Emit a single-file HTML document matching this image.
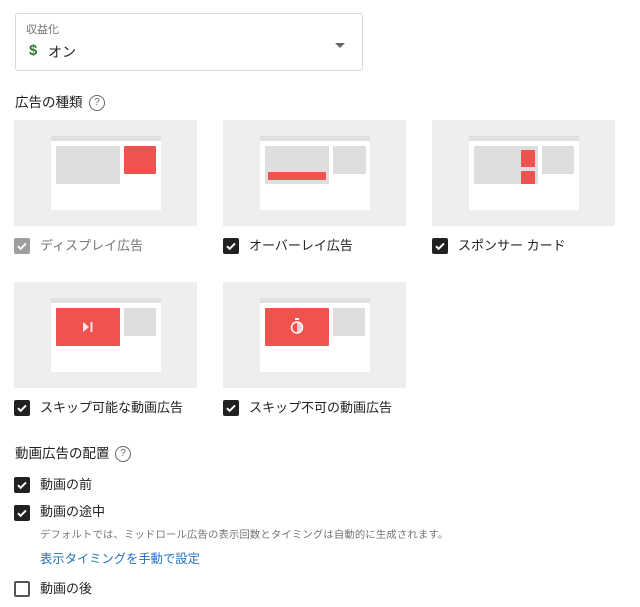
<!DOCTYPE html>
<html><head><meta charset="utf-8"><style>
*{margin:0;padding:0;box-sizing:border-box}
body{width:640px;height:607px;background:#fff;font-family:"Liberation Sans","Noto Sans CJK JP",sans-serif;color:#222;position:relative;overflow:hidden}
.a{position:absolute}
.sel{left:15px;top:13px;width:348px;height:58px;border:1px solid #dadada;border-radius:3px}
.card{background:#eeeeee;width:183px;height:106px}
.bar{background:#e0e0e0}
.white{background:#fff}
.g{background:#dedede}
.r{background:#ef5350;border-radius:1px}
.cb{width:16px;height:16px;border-radius:2px;background:#212121}
.cb svg{position:absolute;left:2px;top:2px}
.lbl{font-size:13px;line-height:16px}
.h{font-size:13.5px;line-height:16px}
.q{width:16px;height:16px;border:1.3px solid #666;border-radius:50%;font-size:10px;text-align:center;line-height:13px;color:#666}
</style></head><body>
<div class="a sel"></div>
<div class="a" style="left:26px;top:21px;font-size:11px;color:#757575">収益化</div>
<div class="a" style="left:29px;top:42px;font-size:15px;color:#2e7d32;font-weight:bold">$</div>
<div class="a" style="left:48px;top:42px;font-size:14px">オン</div>
<div class="a" style="left:335px;top:43px;width:0;height:0;border-left:5px solid transparent;border-right:5px solid transparent;border-top:5px solid #666"></div>

<div class="a h" style="left:15px;top:95px">広告の種類</div>
<div class="a q" style="left:89px;top:95px">?</div>

<div class="a card" style="left:14px;top:120px"></div>
<div class="a bar" style="left:51px;top:136px;width:110px;height:5px"></div>
<div class="a white" style="left:51px;top:141px;width:110px;height:69px"></div>
<div class="a g" style="left:56px;top:146px;width:64px;height:38px"></div>
<div class="a r" style="left:124px;top:146px;width:32px;height:28px"></div>

<div class="a card" style="left:223px;top:120px"></div>
<div class="a bar" style="left:260px;top:136px;width:110px;height:5px"></div>
<div class="a white" style="left:260px;top:141px;width:110px;height:69px"></div>
<div class="a g" style="left:265px;top:146px;width:64px;height:38px"></div>
<div class="a g" style="left:333px;top:146px;width:33px;height:28px"></div>
<div class="a r" style="left:268px;top:172px;width:58px;height:8px"></div>

<div class="a card" style="left:432px;top:120px"></div>
<div class="a bar" style="left:469px;top:136px;width:110px;height:5px"></div>
<div class="a white" style="left:469px;top:141px;width:110px;height:69px"></div>
<div class="a g" style="left:474px;top:146px;width:64px;height:38px"></div>
<div class="a g" style="left:542px;top:146px;width:32px;height:28px"></div>
<div class="a r" style="left:521px;top:150px;width:14px;height:17px"></div>
<div class="a r" style="left:521px;top:171px;width:14px;height:13px"></div>

<div class="a cb" style="left:14px;top:238px;background:#9e9e9e"><svg width="12" height="12" viewBox="0 0 12 12"><path d="M2 6.2l2.6 2.6L10 3.4" stroke="#fff" stroke-width="2" fill="none"/></svg></div>
<div class="a lbl" style="left:40px;top:238px;color:#757575">ディスプレイ広告</div>
<div class="a cb" style="left:223px;top:238px"><svg width="12" height="12" viewBox="0 0 12 12"><path d="M2 6.2l2.6 2.6L10 3.4" stroke="#fff" stroke-width="2" fill="none"/></svg></div>
<div class="a lbl" style="left:249px;top:238px">オーバーレイ広告</div>
<div class="a cb" style="left:432px;top:238px"><svg width="12" height="12" viewBox="0 0 12 12"><path d="M2 6.2l2.6 2.6L10 3.4" stroke="#fff" stroke-width="2" fill="none"/></svg></div>
<div class="a lbl" style="left:458px;top:238px">スポンサー カード</div>

<div class="a card" style="left:14px;top:282px"></div>
<div class="a bar" style="left:51px;top:298px;width:110px;height:5px"></div>
<div class="a white" style="left:51px;top:303px;width:110px;height:69px"></div>
<div class="a r" style="left:56px;top:308px;width:64px;height:38px"></div>
<div class="a g" style="left:124px;top:308px;width:32px;height:28px"></div>
<svg class="a" style="left:82px;top:322px" width="12" height="10" viewBox="0 0 12 10"><path d="M1 0L7 5L1 10Z" fill="#fff" opacity=".85"/><rect x="8.5" y="0" width="2" height="10" fill="#fff" opacity=".85"/></svg>

<div class="a card" style="left:223px;top:282px"></div>
<div class="a bar" style="left:260px;top:298px;width:110px;height:5px"></div>
<div class="a white" style="left:260px;top:303px;width:110px;height:69px"></div>
<div class="a r" style="left:265px;top:308px;width:64px;height:38px"></div>
<div class="a g" style="left:333px;top:308px;width:32px;height:28px"></div>
<svg class="a" style="left:290px;top:318px" width="14" height="16" viewBox="0 0 14 16"><rect x="5" y="0" width="4" height="2" fill="#fff"/><circle cx="7" cy="9.5" r="5.5" fill="none" stroke="#fff" stroke-width="1.5"/><path d="M7 4v11a5.5 5.5 0 0 0 0-11z" fill="#fff" opacity=".7"/></svg>

<div class="a cb" style="left:14px;top:400px"><svg width="12" height="12" viewBox="0 0 12 12"><path d="M2 6.2l2.6 2.6L10 3.4" stroke="#fff" stroke-width="2" fill="none"/></svg></div>
<div class="a lbl" style="left:40px;top:400px">スキップ可能な動画広告</div>
<div class="a cb" style="left:223px;top:400px"><svg width="12" height="12" viewBox="0 0 12 12"><path d="M2 6.2l2.6 2.6L10 3.4" stroke="#fff" stroke-width="2" fill="none"/></svg></div>
<div class="a lbl" style="left:249px;top:400px">スキップ不可の動画広告</div>

<div class="a h" style="left:15px;top:446px">動画広告の配置</div>
<div class="a q" style="left:115px;top:446px">?</div>

<div class="a cb" style="left:14px;top:477px"><svg width="12" height="12" viewBox="0 0 12 12"><path d="M2 6.2l2.6 2.6L10 3.4" stroke="#fff" stroke-width="2" fill="none"/></svg></div>
<div class="a lbl" style="left:40px;top:477px">動画の前</div>
<div class="a cb" style="left:14px;top:505px"><svg width="12" height="12" viewBox="0 0 12 12"><path d="M2 6.2l2.6 2.6L10 3.4" stroke="#fff" stroke-width="2" fill="none"/></svg></div>
<div class="a lbl" style="left:40px;top:504px">動画の途中</div>
<div class="a" style="left:40px;top:526px;font-size:10.3px;color:#757575;letter-spacing:0.2px">デフォルトでは、ミッドロール広告の表示回数とタイミングは自動的に生成されます。</div>
<div class="a" style="left:40px;top:549px;font-size:12.3px;color:#1e73be">表示タイミングを手動で設定</div>
<div class="a" style="left:14px;top:581px;width:16px;height:16px;border:2px solid #555;border-radius:2px"></div>
<div class="a lbl" style="left:40px;top:581px">動画の後</div>
</body></html>
